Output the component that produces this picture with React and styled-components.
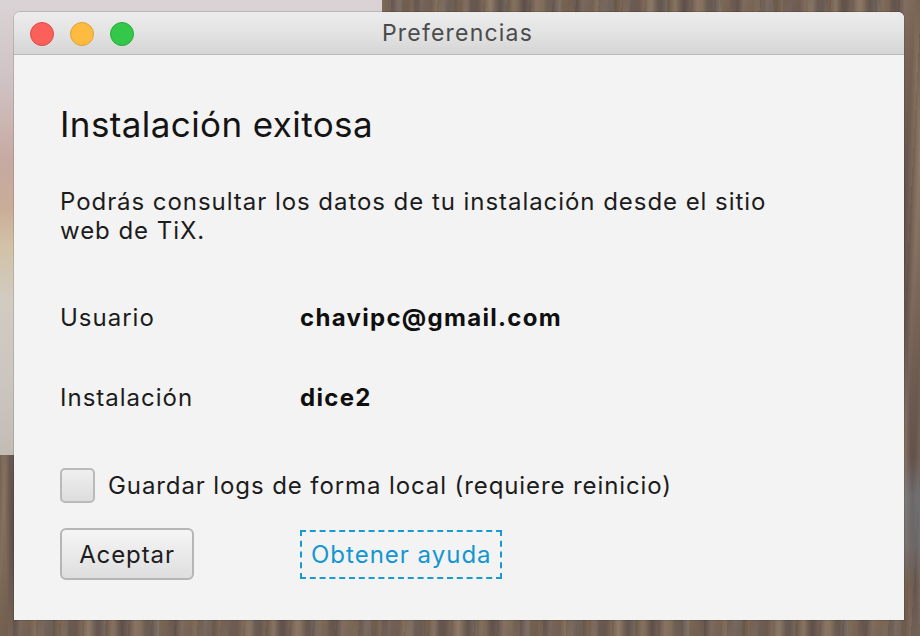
import React from "react";
import styled, { createGlobalStyle } from "styled-components";

const Global = createGlobalStyle`
  html, body { margin: 0; padding: 0; }
  body {
    width: 920px;
    height: 636px;
    overflow: hidden;
    font-family: Inter, "Noto Sans", "Liberation Sans", sans-serif;
  }
`;

const Desktop = styled.div`
  width: 920px;
  height: 636px;
  box-sizing: border-box;
  padding: 12px 16px 16px 14px;
  background:
    linear-gradient(180deg, #dad3d5 0%, #cfc2c3 18%, #c6a9a0 36%, #c9ad98 46%, #d1c2a6 54%, #d2cbc2 66%, #cbc5c0 85%, #c3bcb5 100%) 0 0 / 382px 455px no-repeat,
    linear-gradient(180deg, rgba(0, 0, 0, 0) 0%, rgba(0, 0, 0, 0) 72%, rgba(120, 135, 150, 0.45) 78%, rgba(120, 135, 150, 0.35) 86%, rgba(0, 0, 0, 0) 92%) 904px 0 / 16px 636px no-repeat,
    repeating-linear-gradient(93deg, rgba(40, 30, 25, 0.14) 0px, rgba(40, 30, 25, 0) 3px, rgba(255, 230, 200, 0.08) 7px, rgba(40, 30, 25, 0) 11px, rgba(30, 20, 15, 0.12) 17px, rgba(0, 0, 0, 0) 23px),
    repeating-linear-gradient(88deg, #71604f 0px, #7f6a5a 9px, #665750 16px, #7b6659 27px, #86725f 35px, #6b5d55 44px, #77695f 53px),
    #74625a;
`;

const Window = styled.div`
  width: 890px;
  height: 608px;
  display: flex;
  flex-direction: column;
  border-radius: 6px 6px 0 0;
  overflow: hidden;
  background: #f3f3f3;
  box-shadow: 0 0 0 1px rgba(0, 0, 0, 0.12);
`;

const TitleBar = styled.div`
  height: 42px;
  flex: none;
  position: relative;
  display: flex;
  align-items: center;
  justify-content: center;
  background: linear-gradient(180deg, #ececec 0%, #e3e3e3 50%, #d5d5d5 100%);
  border-bottom: 1px solid #b9b9b9;
`;

const Lights = styled.div`
  position: absolute;
  left: 16px;
  top: 10px;
  display: flex;
  gap: 16px;
`;

const Light = styled.span`
  width: 24px;
  height: 24px;
  border-radius: 50%;
  box-sizing: border-box;
  background: ${(p) => p.$fill};
  border: 1px solid ${(p) => p.$edge};
`;

const Title = styled.div`
  font-size: 23px;
  color: #4b4b4b;
  letter-spacing: 1.2px;
  padding-right: 3px;
`;

const Content = styled.div`
  flex: 1;
  display: flex;
  flex-direction: column;
  padding: 44px 46px 0 46px;
  color: #1c1c1c;
  font-size: 24px;
  letter-spacing: 1px;
`;

const Heading = styled.h1`
  margin: 0;
  font-size: 35px;
  font-weight: 400;
  line-height: 50px;
  letter-spacing: 0.4px;
  color: #141414;
`;

const Paragraph = styled.p`
  margin: 38px 0 0;
  line-height: 29px;
  letter-spacing: 0.95px;
  width: 760px;
`;

const InfoGrid = styled.div`
  margin-top: 58px;
  display: grid;
  grid-template-columns: 240px 1fr;
  row-gap: 50px;
  line-height: 30px;
`;

const Label = styled.div``;

const Value = styled.div`
  font-weight: 700;
  letter-spacing: 1.3px;
  color: #0f0f0f;
`;

const CheckRow = styled.label`
  margin-top: 55px;
  display: flex;
  align-items: center;
  gap: 13px;
  letter-spacing: 0.9px;
`;

const Box = styled.span`
  width: 35px;
  height: 35px;
  box-sizing: border-box;
  border: 2px solid #bababa;
  border-radius: 5px;
  background: linear-gradient(180deg, #efefef 0%, #dddddd 100%);
`;

const Actions = styled.div`
  margin-top: 25px;
  display: flex;
  align-items: center;
  gap: 106px;
`;

const Button = styled.button`
  width: 134px;
  height: 52px;
  box-sizing: border-box;
  border: 2px solid #b6b6b6;
  border-radius: 6px;
  background: linear-gradient(180deg, #f5f5f5 0%, #e9e9e9 55%, #dedede 100%);
  font-family: inherit;
  font-size: 24px;
  letter-spacing: 0.9px;
  color: #1c1c1c;
  padding: 0;
`;

const HelpLink = styled.a`
  display: inline-flex;
  align-items: center;
  height: 49px;
  box-sizing: border-box;
  padding: 0 8px 0 9px;
  border: 2px dashed #1a9bd0;
  color: #1496d0;
  text-decoration: none;
`;

export default function App() {
  return (
    <>
      <Global />
      <Desktop>
        <Window>
          <TitleBar>
            <Lights>
              <Light $fill="#fc605b" $edge="#de4a44" />
              <Light $fill="#fdbc40" $edge="#dea034" />
              <Light $fill="#34c84a" $edge="#27aa35" />
            </Lights>
            <Title>Preferencias</Title>
          </TitleBar>
          <Content>
            <Heading>Instalación exitosa</Heading>
            <Paragraph>
              Podrás consultar los datos de tu instalación desde el sitio
              <br />
              web de TiX.
            </Paragraph>
            <InfoGrid>
              <Label>Usuario</Label>
              <Value>chavipc@gmail.com</Value>
              <Label>Instalación</Label>
              <Value>dice2</Value>
            </InfoGrid>
            <CheckRow>
              <Box />
              Guardar logs de forma local (requiere reinicio)
            </CheckRow>
            <Actions>
              <Button>Aceptar</Button>
              <HelpLink href="#">Obtener ayuda</HelpLink>
            </Actions>
          </Content>
        </Window>
      </Desktop>
    </>
  );
}
